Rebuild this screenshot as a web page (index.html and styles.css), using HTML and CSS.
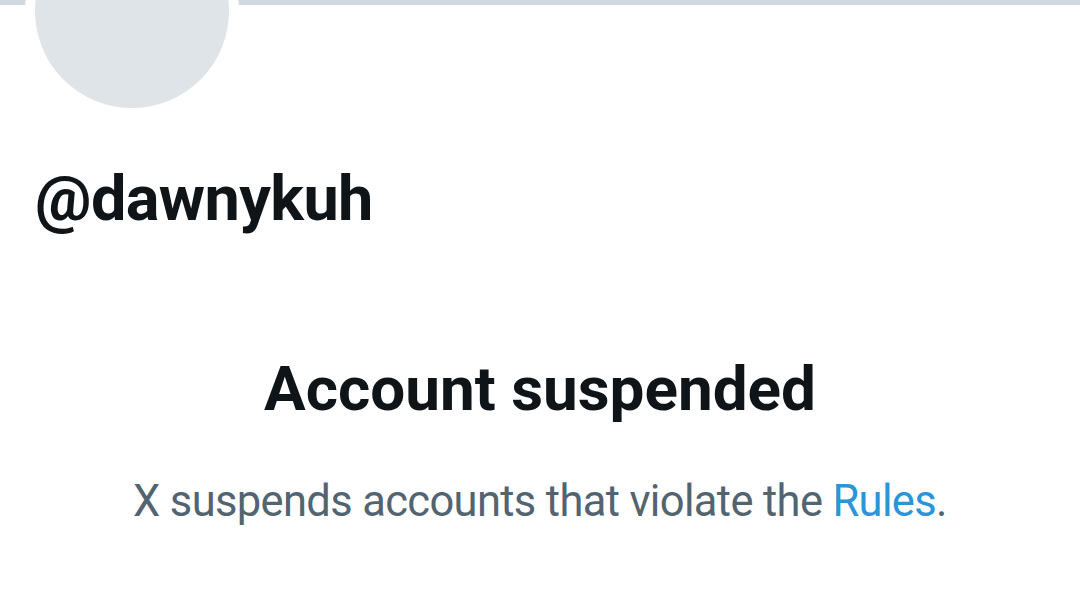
FILE: index.html
```html
<!DOCTYPE html>
<html>
<head>
<meta charset="utf-8">
<link rel="stylesheet" href="styles.css">
</head>
<body>
<div class="page">
  <div class="banner"></div>
  <div class="header">
    <div class="avatar"></div>
    <h1 class="handle">@dawnykuh</h1>
  </div>
  <div class="notice">
    <h2 class="title">Account suspended</h2>
    <p class="desc">X suspends accounts that violate the <a class="link" href="#">Rules</a>.</p>
  </div>
</div>
</body>
</html>
```

FILE: styles.css
```css
html, body {
  margin: 0;
  padding: 0;
  background: #ffffff;
}
body {
  width: 1080px;
  height: 608px;
  overflow: hidden;
  font-family: Roboto, "Liberation Sans", sans-serif;
  color: #0f1419;
}
.page {
  display: flex;
  flex-direction: column;
}
.banner {
  height: 5px;
  background: #cfd9de;
}
.header {
  display: flex;
  flex-direction: column;
  padding-left: 25px;
}
.avatar {
  position: relative;
  z-index: 1;
  width: 194px;
  height: 194px;
  border-radius: 50%;
  border: 10px solid #ffffff;
  background: #dfe4e9;
  margin-top: -101px;
}
.handle {
  margin: 43px 0 0 10px;
  font-size: 63px;
  line-height: 1.2;
  font-weight: 700;
  letter-spacing: -0.6px;
}
.notice {
  display: flex;
  flex-direction: column;
  align-items: center;
}
.title {
  margin: 115px 0 0 0;
  font-size: 62px;
  line-height: 1.2;
  font-weight: 700;
}
.desc {
  margin: 50px 0 0 0;
  font-size: 43.5px;
  line-height: 1.2;
  letter-spacing: -0.65px;
  color: #536471;
}
.link {
  color: #2b95d8;
  text-decoration: none;
}
```
